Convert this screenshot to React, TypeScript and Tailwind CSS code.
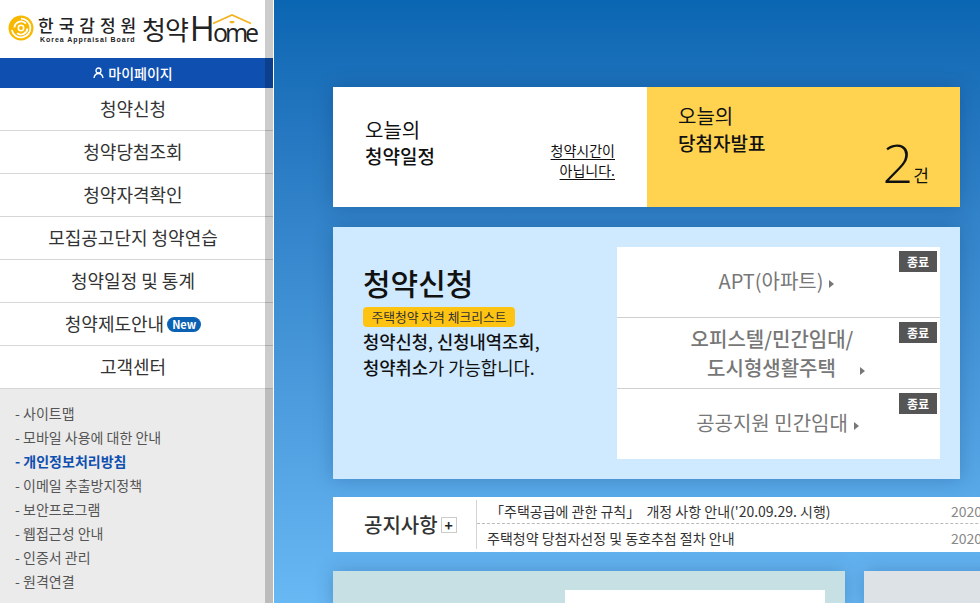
const kr = 'font-["Noto_Sans_CJK_KR","Noto_Sans",sans-serif]';

const navItems = ['청약신청', '청약당첨조회', '청약자격확인', '모집공고단지 청약연습', '청약일정 및 통계'];
const subLinks = ['사이트맵', '모바일 사용에 대한 안내', '개인정보처리방침', '이메일 추출방지정책', '보안프로그램', '웹접근성 안내', '인증서 관리', '원격연결'];

function Logo() {
  return (
    <div className="flex h-[58px] items-start bg-white pt-[15px] pl-2">
      <svg width="26" height="26" viewBox="0 0 26 26" className="shrink-0">
        <circle cx="13" cy="13" r="12.500" fill="#f9b800" />
        <path d="M13 3.600a9.400 9.400 0 1 1-9.200 11.300" fill="none" stroke="#fff" strokeWidth="1.800" />
        <path d="M6.400 12.500a6.600 6.600 0 0 1 11.500-3.800M19.400 13.500a6.500 6.500 0 0 1-10.300 4.800" fill="none" stroke="#fff" strokeWidth="1.800" />
        <circle cx="13" cy="13" r="2.700" fill="none" stroke="#fff" strokeWidth="1.500" />
      </svg>
      <div className="ml-[4px] flex w-[103px] flex-col items-start">
        <span className="text-[17px] leading-[20px] font-medium tracking-[5px] text-[#222] whitespace-nowrap">한국감정원</span>
        <span className='ml-[2px] font-["Liberation_Sans"] text-[7px] leading-[10px] font-bold tracking-[0.95px] text-[#222] whitespace-nowrap'>Korea Appraisal Board</span>
      </div>
      <span className="mt-[-1px] ml-[1px] text-[26px] leading-[29px] tracking-[-1px] text-[#222] whitespace-nowrap">청약</span>
      <div className='relative ml-[2px] flex h-[29px] items-end font-["Open_Sans"] leading-none text-[#222]'>
        <span className="text-[34px] leading-[32px]">H</span>
        <span className="mb-[-2px] ml-[-2px] text-[25px] leading-[28px] tracking-[-3px]">ome</span>
        <svg width="40" height="11" viewBox="0 0 40 11" className="absolute top-[-1px] left-[22px]">
          <path d="M1 9.500 20 1l19 8.500" fill="none" stroke="#f5b21f" strokeWidth="1.700" />
          <rect x="17.500" y="7" width="5" height="2.200" rx="1.100" fill="#f5b21f" />
        </svg>
      </div>
    </div>
  );
}

function Sidebar() {
  return (
    <aside className="relative flex h-[603px] w-[273px] shrink-0 flex-col">
      <Logo />
      <div className="flex h-[30px] items-center justify-center gap-[4px] bg-[#0f4fb0] pr-[7px] text-[14px] font-medium text-white">
        <svg width="11" height="12" viewBox="0 0 11 12" fill="none" stroke="#fff" strokeWidth="1.300">
          <circle cx="5.500" cy="3.500" r="2.500" />
          <path d="M1 11c.5-3 2.500-4.500 4.500-4.500S9.500 8 10 11" />
        </svg>
        마이페이지
      </div>
      {navItems.map((item) => (
        <div key={item} className="flex h-[43px] items-center justify-center border-b border-[#d6d6d6] bg-white pr-[7px] pb-[2px] text-[18px] text-[#333]">
          {item}
        </div>
      ))}
      <div className="flex h-[43px] items-center justify-center gap-[3px] border-b border-[#d6d6d6] bg-white pr-[7px] pb-[2px] text-[18px] text-[#333]">
        청약제도안내
        <span className="mt-[2px] flex h-[15px] w-[34px] items-center justify-center rounded-full bg-[#0b62b5] text-[11px] font-bold text-white">New</span>
      </div>
      <div className="flex h-[43px] items-center justify-center border-b border-[#d6d6d6] bg-white pr-[7px] pb-[2px] text-[18px] text-[#333]">
        고객센터
      </div>
      <ul className="flex-1 bg-[#ebebeb] pt-[12px] pl-[15px]">
        {subLinks.map((link) => (
          <li key={link} className={link === '개인정보처리방침' ? 'h-[24px] text-[14px] leading-[24px] font-bold text-[#0f4fb0]' : 'h-[24px] text-[14px] leading-[24px] text-[#555]'}>
            - {link}
          </li>
        ))}
      </ul>
      {/* overlay scrollbar */}
      <div className="absolute top-0 right-0 h-full w-[8px] bg-black/20" />
    </aside>
  );
}

function Arrow() {
  return <span className="ml-[6px] inline-block h-0 w-0 border-y-[4px] border-l-[5px] border-y-transparent border-l-[#777] align-middle" />;
}

function Badge() {
  return (
    <span className="absolute top-[4px] right-[3px] flex h-[21px] w-[38px] items-center justify-center bg-[#555] text-[12px] font-bold text-white">종료</span>
  );
}

export default function App() {
  return (
    <div className={`flex h-[603px] w-[980px] overflow-hidden bg-white ${kr}`}>
      <Sidebar />
      <div className="w-px shrink-0 bg-white" />
      <main className="flex-1 overflow-hidden bg-gradient-to-b from-[#0a66b2] to-[#68b8f4] pt-[87px] pl-[59px]">
        <section className="flex h-[120px] w-[627px] shadow-[0_0_18px_rgba(0,40,90,0.25)]">
          <div className="relative w-[314px] bg-white pt-[30px] pl-[32px]">
            <p className="text-[20px] leading-[26px] text-[#111]">오늘의</p>
            <p className="mt-[-1px] text-[19px] leading-[27px] font-medium text-[#111]">청약일정</p>
            <div className="absolute top-[53px] right-[32px] text-right text-[14px] leading-[20px] text-[#111] underline underline-offset-[3px]">
              <p>청약시간이</p>
              <p>아닙니다.</p>
            </div>
          </div>
          <div className="relative w-[313px] bg-[#ffd34f] pt-[16px] pl-[31px]">
            <p className="text-[20px] leading-[26px] text-[#111]">오늘의</p>
            <p className="text-[19px] leading-[28px] font-medium text-[#111]">당첨자발표</p>
            <div className="absolute right-[31px] bottom-[19px] flex items-end text-[#111]">
              <span className='font-["Open_Sans"] text-[54px] leading-[52px] font-light'>2</span>
              <span className="text-[17px] leading-[26px]">건</span>
            </div>
          </div>
        </section>

        <section className="mt-[20px] flex h-[252px] w-[627px] bg-[#cfe9ff] py-[20px] pr-[20px] pl-[30px] shadow-[0_0_18px_rgba(0,40,90,0.25)]">
          <div className="w-[254px] pt-[14px]">
            <h2 className="text-[30px] leading-[42px] font-medium text-[#111]">청약신청</h2>
            <span className="mt-[4px] flex h-[20px] w-[152px] items-center justify-center rounded-[4px] bg-[#ffc412] text-[12.800px] text-[#333]">주택청약 자격 체크리스트</span>
            <p className="mt-[1px] text-[17.700px] leading-[26px] text-[#111]">
              <strong className="font-medium">청약신청</strong>, <strong className="font-medium">신청내역조회</strong>,<br />
              <strong className="font-medium">청약취소</strong>가 가능합니다.
            </p>
          </div>
          <div className="flex w-[323px] flex-col bg-white text-[20px] text-[#777]">
            <div className="relative flex h-[71px] items-center justify-center border-b border-[#cfcfcf] pr-[4px] pb-[2px]">
              <Badge />
              <span>APT(아파트)<Arrow /></span>
            </div>
            <div className="relative flex h-[71px] flex-col items-center justify-center border-b border-[#cfcfcf] leading-[29px] font-medium">
              <Badge />
              <span className="pr-[13px]">오피스텔/민간임대/</span>
              <span className="pl-[15px]">도시형생활주택<span className="ml-[24px] inline-block h-0 w-0 border-y-[4px] border-l-[5px] border-y-transparent border-l-[#777] align-middle" /></span>
            </div>
            <div className="relative flex h-[70px] items-center justify-center pr-[2px] pb-[2px]">
              <Badge />
              <span>공공지원 민간임대<Arrow /></span>
            </div>
          </div>
        </section>

        <section className="mt-[18px] flex h-[55px] w-[700px] items-stretch bg-white">
          <div className="flex w-[143px] items-center pl-[31px] text-[20px] leading-none font-medium text-[#333]">
            공지사항
            <span className="ml-[3px] flex h-[16px] w-[16px] items-center justify-center border border-[#ccc] text-[14px] leading-none font-bold text-[#222]">+</span>
          </div>
          <div className="my-[3px] flex-1 border-l border-[#d4d4d4] text-[14px] text-[#333]">
            <div className="flex h-[24px] items-center justify-between border-b border-dashed border-[#bbb] pb-[1px] pl-[13px] whitespace-nowrap">
              <span>「주택공급에 관한 규칙」&nbsp; 개정 사항 안내('20.09.29. 시행)</span>
              <span className="w-[82px] text-[#888]">2020</span>
            </div>
            <div className="flex h-[28px] items-center justify-between pl-[10px] whitespace-nowrap">
              <span>주택청약 당첨자선정 및 동호추첨 절차 안내</span>
              <span className="w-[82px] text-[#888]">2020</span>
            </div>
          </div>
        </section>

        <section className="mt-[19px] flex w-[700px] gap-[19px]">
          <div className="h-[40px] w-[512px] shrink-0 bg-[#c6e0e4] pt-[19px] pl-[232px] shadow-[0_0_18px_rgba(0,40,90,0.25)]">
            <div className="h-[21px] w-[260px] bg-white" />
          </div>
          <div className="h-[40px] w-[200px] shrink-0 bg-[#dde2e6] shadow-[0_0_18px_rgba(0,40,90,0.25)]" />
        </section>
      </main>
    </div>
  );
}
